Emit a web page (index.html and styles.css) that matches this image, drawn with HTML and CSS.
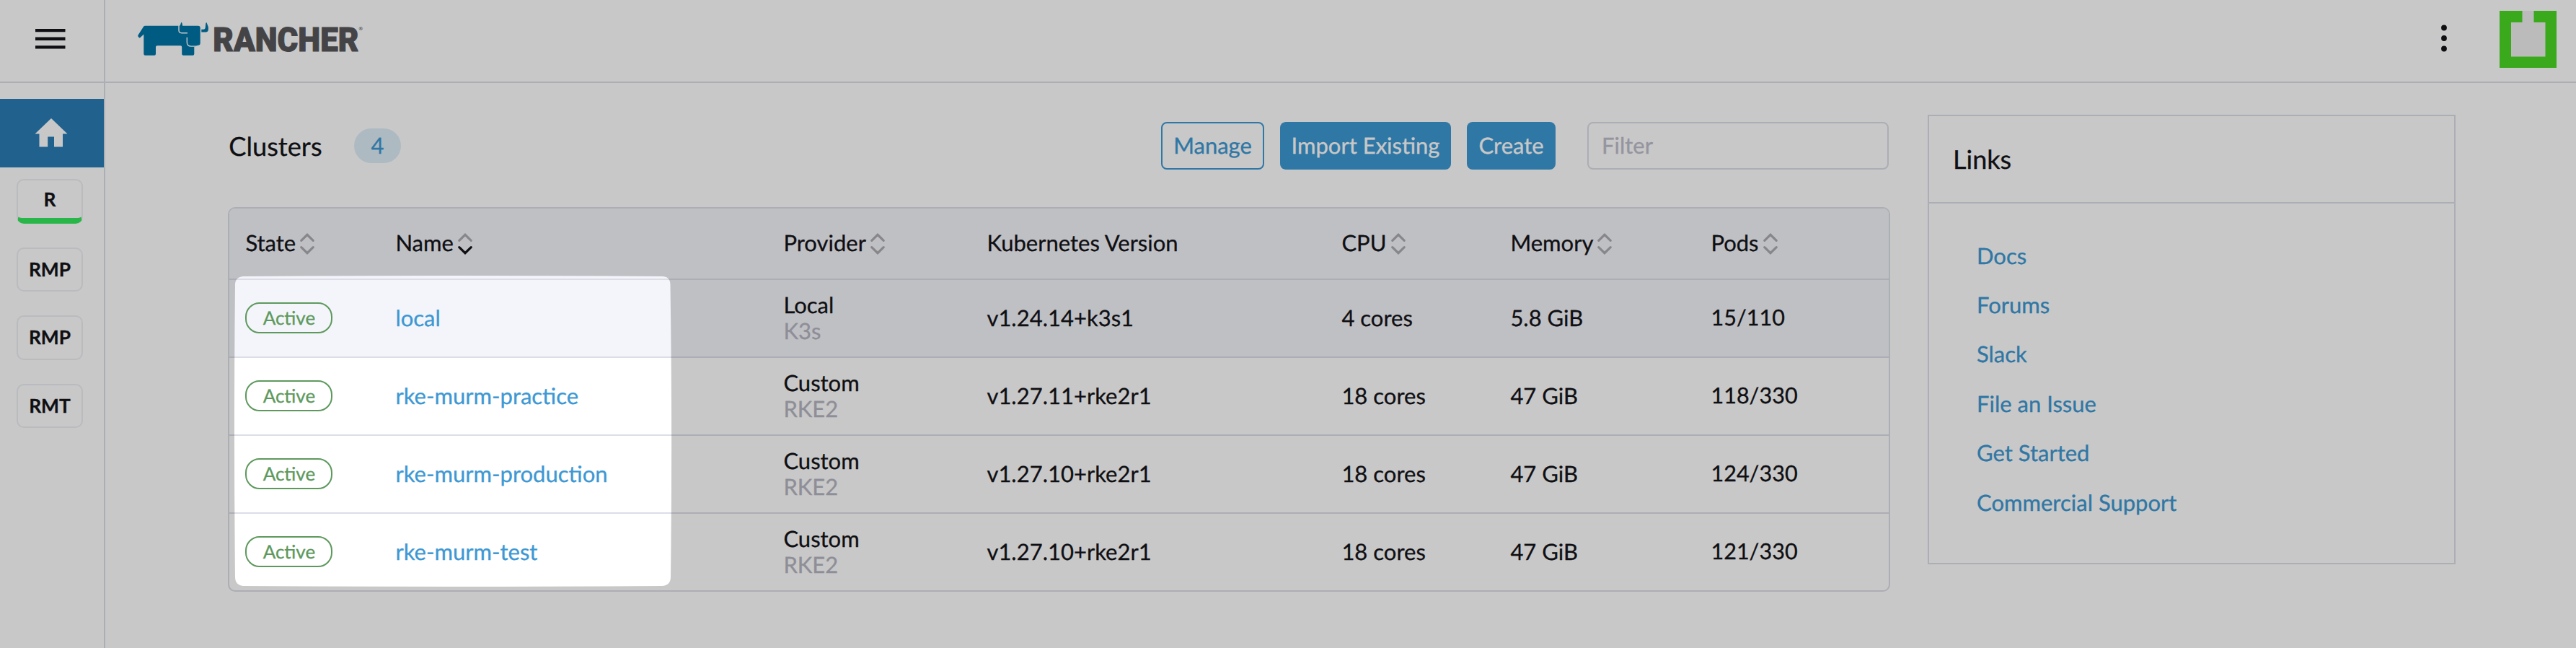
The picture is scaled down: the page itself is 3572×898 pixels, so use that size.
FILE: index.html
```html
<!DOCTYPE html>
<html lang="en">
<head>
<meta charset="utf-8">
<title>Rancher</title>
<link rel="stylesheet" href="styles.css">
</head>
<body>
<div class="app">
  <aside class="side">
    <div class="menu"><svg width="42" height="28" viewBox="0 0 42 28"><path d="M0 0h41.5v4.3H0zM0 11.6h41.5v4.3H0zM0 23.2h41.5v4.3H0z"/></svg></div>
    <a class="home"><svg width="46" height="40" viewBox="0 0 46 40"><path d="M23 0 45.5 21.5H39V39.500H27V25.500H18.200V39.500H6.500V21.500H.5z"/></svg></a>
    <nav class="pins">
      <a class="pin current">R</a>
      <a class="pin">RMP</a>
      <a class="pin">RMP</a>
      <a class="pin">RMT</a>
    </nav>
  </aside>
  <div class="main">
    <header class="top">
      <svg class="logo" width="320" height="50" viewBox="0 0 320 50">
        <path class="cow" d="M7.800 6.200Q8.700 4.800 10.300 4.800H58Q59.300 4 59.700 1.500Q60.500-1 61.400 1L62.200 4.800H83.700Q86.700 4.800 86.700 7.800V28.800Q86.700 31.800 83.700 31.800L78.300 34V43.700Q78.300 45.700 76.300 45.700H63.200Q61.200 45.700 61.200 43.700V34.300Q61.200 32.300 59.200 32.300H27Q25 32.300 25 34.300V43.700Q25 45.700 23 45.700H10.300Q8.300 45.700 8.300 43.700V16.500L3.500 21Q2.300 22 1.500 20.800L.5 19.500Q0 18.500 .6 17.600z"/>
        <path class="gap" d="M57 4V11Q57 14.700 60.800 14.700H69M68.300 20.800V27.500Q68.300 33.100 74 33.100H86"/>
        <path class="cow" d="M94.300 1.500Q95.500-1.200 96 1.500L97.700 6Q98.200 8 97.800 10.500Q97.300 13.500 94.300 13.500H88.300V9.700H91Q93.700 9.700 93.800 6.500z"/>
        <text class="word" x="104.300" y="39.800" textLength="202" lengthAdjust="spacingAndGlyphs">RANCHER</text>
        <text class="reg" x="306.500" y="11">®</text>
      </svg>
      <span class="grow"></span>
      <svg class="dots" width="8" height="38" viewBox="0 0 8 38"><circle cx="4" cy="4.500" r="3.900"/><circle cx="4" cy="19" r="3.900"/><circle cx="4" cy="33.500" r="3.900"/></svg>
      <svg class="avatar" width="79" height="79" viewBox="0 0 79 79"><path class="pale" d="M0 0h79v79H0z"/><path class="green" d="M0 0H31.500V16H16V63.500H63.500V16H47.500V0H79V79H0z"/></svg>
    </header>
    <main class="content">
      <section class="clusters">
        <div class="bar">
          <h1>Clusters</h1><span class="count">4</span><span class="grow"></span>
          <a class="btn line manage">Manage</a><a class="btn import">Import Existing</a><a class="btn create">Create</a>
          <input class="filter" placeholder="Filter">
        </div>
        <div class="table">
          <div class="row head">
            <div class="cell"><span>State</span><svg class="sort" width="20" height="30" viewBox="0 0 20 30"><path d="M1.800 10.300 10 2.300l8.200 8"/><path d="M1.800 19.700 10 27.700l8.200-8"/></svg></div>
            <div class="cell"><span>Name</span><svg class="sort" width="20" height="30" viewBox="0 0 20 30"><path d="M1.800 10.300 10 2.300l8.200 8"/><path class="on" d="M1.800 19.700 10 27.700l8.200-8"/></svg></div>
            <div class="cell"><span>Provider</span><svg class="sort" width="20" height="30" viewBox="0 0 20 30"><path d="M1.800 10.300 10 2.300l8.200 8"/><path d="M1.800 19.700 10 27.700l8.200-8"/></svg></div>
            <div class="cell"><span>Kubernetes Version</span></div>
            <div class="cell"><span>CPU</span><svg class="sort" width="20" height="30" viewBox="0 0 20 30"><path d="M1.800 10.300 10 2.300l8.200 8"/><path d="M1.800 19.700 10 27.700l8.200-8"/></svg></div>
            <div class="cell"><span>Memory</span><svg class="sort" width="20" height="30" viewBox="0 0 20 30"><path d="M1.800 10.300 10 2.300l8.200 8"/><path d="M1.800 19.700 10 27.700l8.200-8"/></svg></div>
            <div class="cell"><span>Pods</span><svg class="sort" width="20" height="30" viewBox="0 0 20 30"><path d="M1.800 10.300 10 2.300l8.200 8"/><path d="M1.800 19.700 10 27.700l8.200-8"/></svg></div>
          </div>
          <div class="row tint"><div><span class="state">Active</span></div><a>local</a><div class="prov">Local<small>K3s</small></div><div>v1.24.14+k3s1</div><div>4 cores</div><div>5.8 GiB</div><div class="num">15/110</div></div>
          <div class="row"><div><span class="state">Active</span></div><a>rke-murm-practice</a><div class="prov">Custom<small>RKE2</small></div><div>v1.27.11+rke2r1</div><div>18 cores</div><div>47 GiB</div><div class="num">118/330</div></div>
          <div class="row"><div><span class="state">Active</span></div><a>rke-murm-production</a><div class="prov">Custom<small>RKE2</small></div><div>v1.27.10+rke2r1</div><div>18 cores</div><div>47 GiB</div><div class="num">124/330</div></div>
          <div class="row"><div><span class="state">Active</span></div><a>rke-murm-test</a><div class="prov">Custom<small>RKE2</small></div><div>v1.27.10+rke2r1</div><div>18 cores</div><div>47 GiB</div><div class="num">121/330</div></div>
        </div>
      </section>
      <aside class="links">
        <h2>Links</h2>
        <nav><a>Docs</a><a>Forums</a><a>Slack</a><a>File an Issue</a><a>Get Started</a><a>Commercial Support</a></nav>
      </aside>
    </main>
  </div>
</div>
<svg class="spotlight" width="3572" height="898" viewBox="0 0 3572 898"><path fill-rule="evenodd" d="M0 0H3572V898H0zM338 383Q628 381 918 383Q929 383 929.500 394Q932.500 597 930 800Q929.500 811.500 918 812Q628 813.800 338 812Q326.500 811.500 326 800Q324 597 326 394Q326.500 383.500 338 383z"/></svg>
</body>
</html>
```
FILE: styles.css
```css
* { box-sizing: border-box; }
body { margin: 0; background: #fff; color: #141419; font: 31px/36px Lato, sans-serif; text-rendering: geometricPrecision; -webkit-text-stroke: .3px; overflow: hidden; }
svg { display: block; flex: none; }
a { color: #3d98d3; }
.app { display: flex; width: 3572px; height: 898px; }
.side { width: 146px; flex: none; border-right: 2px solid #dcdee7; }
.menu { height: 115px; border-bottom: 2px solid #dcdee7; padding: 40px 0 0 49px; }
.menu path, .dots circle { fill: #141419; }
.home { display: block; height: 95px; margin-top: 22px; padding: 27px 0 0 47.5px; background: #2a7cb4; }
.home path { fill: #fff; }
.pins { display: flex; flex-direction: column; gap: 33px; padding: 16px 0 0 23px; }
.pin { width: 92px; height: 61.6px; border: 2px solid #eeeff4; border-radius: 10px; color: #141419; font-weight: 700; font-size: 26.4px; line-height: 56px; text-align: center; }
.pin.current { border-bottom: 8px solid #35e85c; line-height: 53px; }
.main { flex: 1; }
.top { display: flex; height: 115px; border-bottom: 2px solid #dcdee7; padding: 0 27px 0 45px; }
.logo { margin-top: 31px; overflow: visible; }
.cow { fill: #0075a8; }
.gap { fill: none; stroke: #fff; stroke-width: 1.4px; }
.word { font: 900 46.5px Roboto, sans-serif; fill: #57575b; stroke: #57575b; stroke-width: 1.1px; -webkit-text-stroke: 1.1px #57575b; }
.reg { font: 7px Roboto, sans-serif; fill: #57575b; -webkit-text-stroke: 0; }
.grow { flex: 1; }
.dots { margin: 34px 73px 0 0; }
.avatar { margin-top: 15px; }
.pale { fill: #efefef; }
.green { fill: #4ad824; }
.content { display: flex; align-items: flex-start; padding: 44px 167px 0 170px; gap: 52px; }
.clusters { width: 2305px; padding-top: 10px; }
.bar { display: flex; height: 66px; align-items: center; padding-right: 2px; }
h1 { margin: 0; width: 175px; padding-left: 1.3px; font-size: 36.2px; font-weight: 400; }
.count { width: 65px; height: 48px; line-height: 46px; border-radius: 24px; background: #deeef8; color: #3d98d3; text-align: center; }
.btn { height: 66px; line-height: 64px; border-radius: 8px; background: #3d98d3; color: #fff; text-align: center; margin-right: 22px; }
.line { background: none; border: 2px solid #3d98d3; color: #3d98d3; line-height: 60px; }
.manage { width: 143px; }
.import { width: 237px; }
.create { width: 123px; margin-right: 44px; }
.filter { width: 418px; height: 66px; border: 2px solid #dcdee7; border-radius: 8px; padding: 0 18px 2px; font: inherit; background: #fff; }
.filter::placeholder { color: #bebecb; }
.table { margin-top: 52px; border: 2px solid #dcdee7; border-radius: 10px; overflow: hidden; }
.row { display: grid; grid-template-columns: 208px 538px 282px 492px 234px 278px 1fr; align-items: center; height: 108px; padding: 0 0 2px 22.4px; border-bottom: 2px solid #dcdee7; }
.row:last-child { height: 106px; border-bottom: 0; }
.head { height: 99px; padding-bottom: 0; background: #f4f5fa; }
.tint { background: #f4f5fa; }
.cell { display: flex; align-items: center; gap: 6px; }
.cell span { padding-bottom: 4px; }
.num { font-size: 30.6px; }
.sort { fill: none; stroke: #adadb1; stroke-width: 3.2px; stroke-linecap: round; }
.sort .on { stroke: #141419; }
.state { display: block; width: 121px; height: 43px; border: 2px solid #5d995d; border-radius: 20px; color: #5d995d; font-size: 26px; line-height: 39px; text-align: center; }
.prov small { display: block; font-size: inherit; color: #b6b6c2; }
.links { width: 732px; height: 623px; border: 2px solid #dcdee7; }
h2 { margin: 0; height: 121px; padding-left: 33px; border-bottom: 2px solid #dcdee7; font-size: 36px; font-weight: 400; line-height: 118px; }
.links nav { display: flex; flex-direction: column; padding: 37.5px 0 0 66px; }
.links a { line-height: 68.4px; }
.spotlight { position: absolute; left: 0; top: 0; fill: #000; fill-opacity: .216; pointer-events: none; }
```
